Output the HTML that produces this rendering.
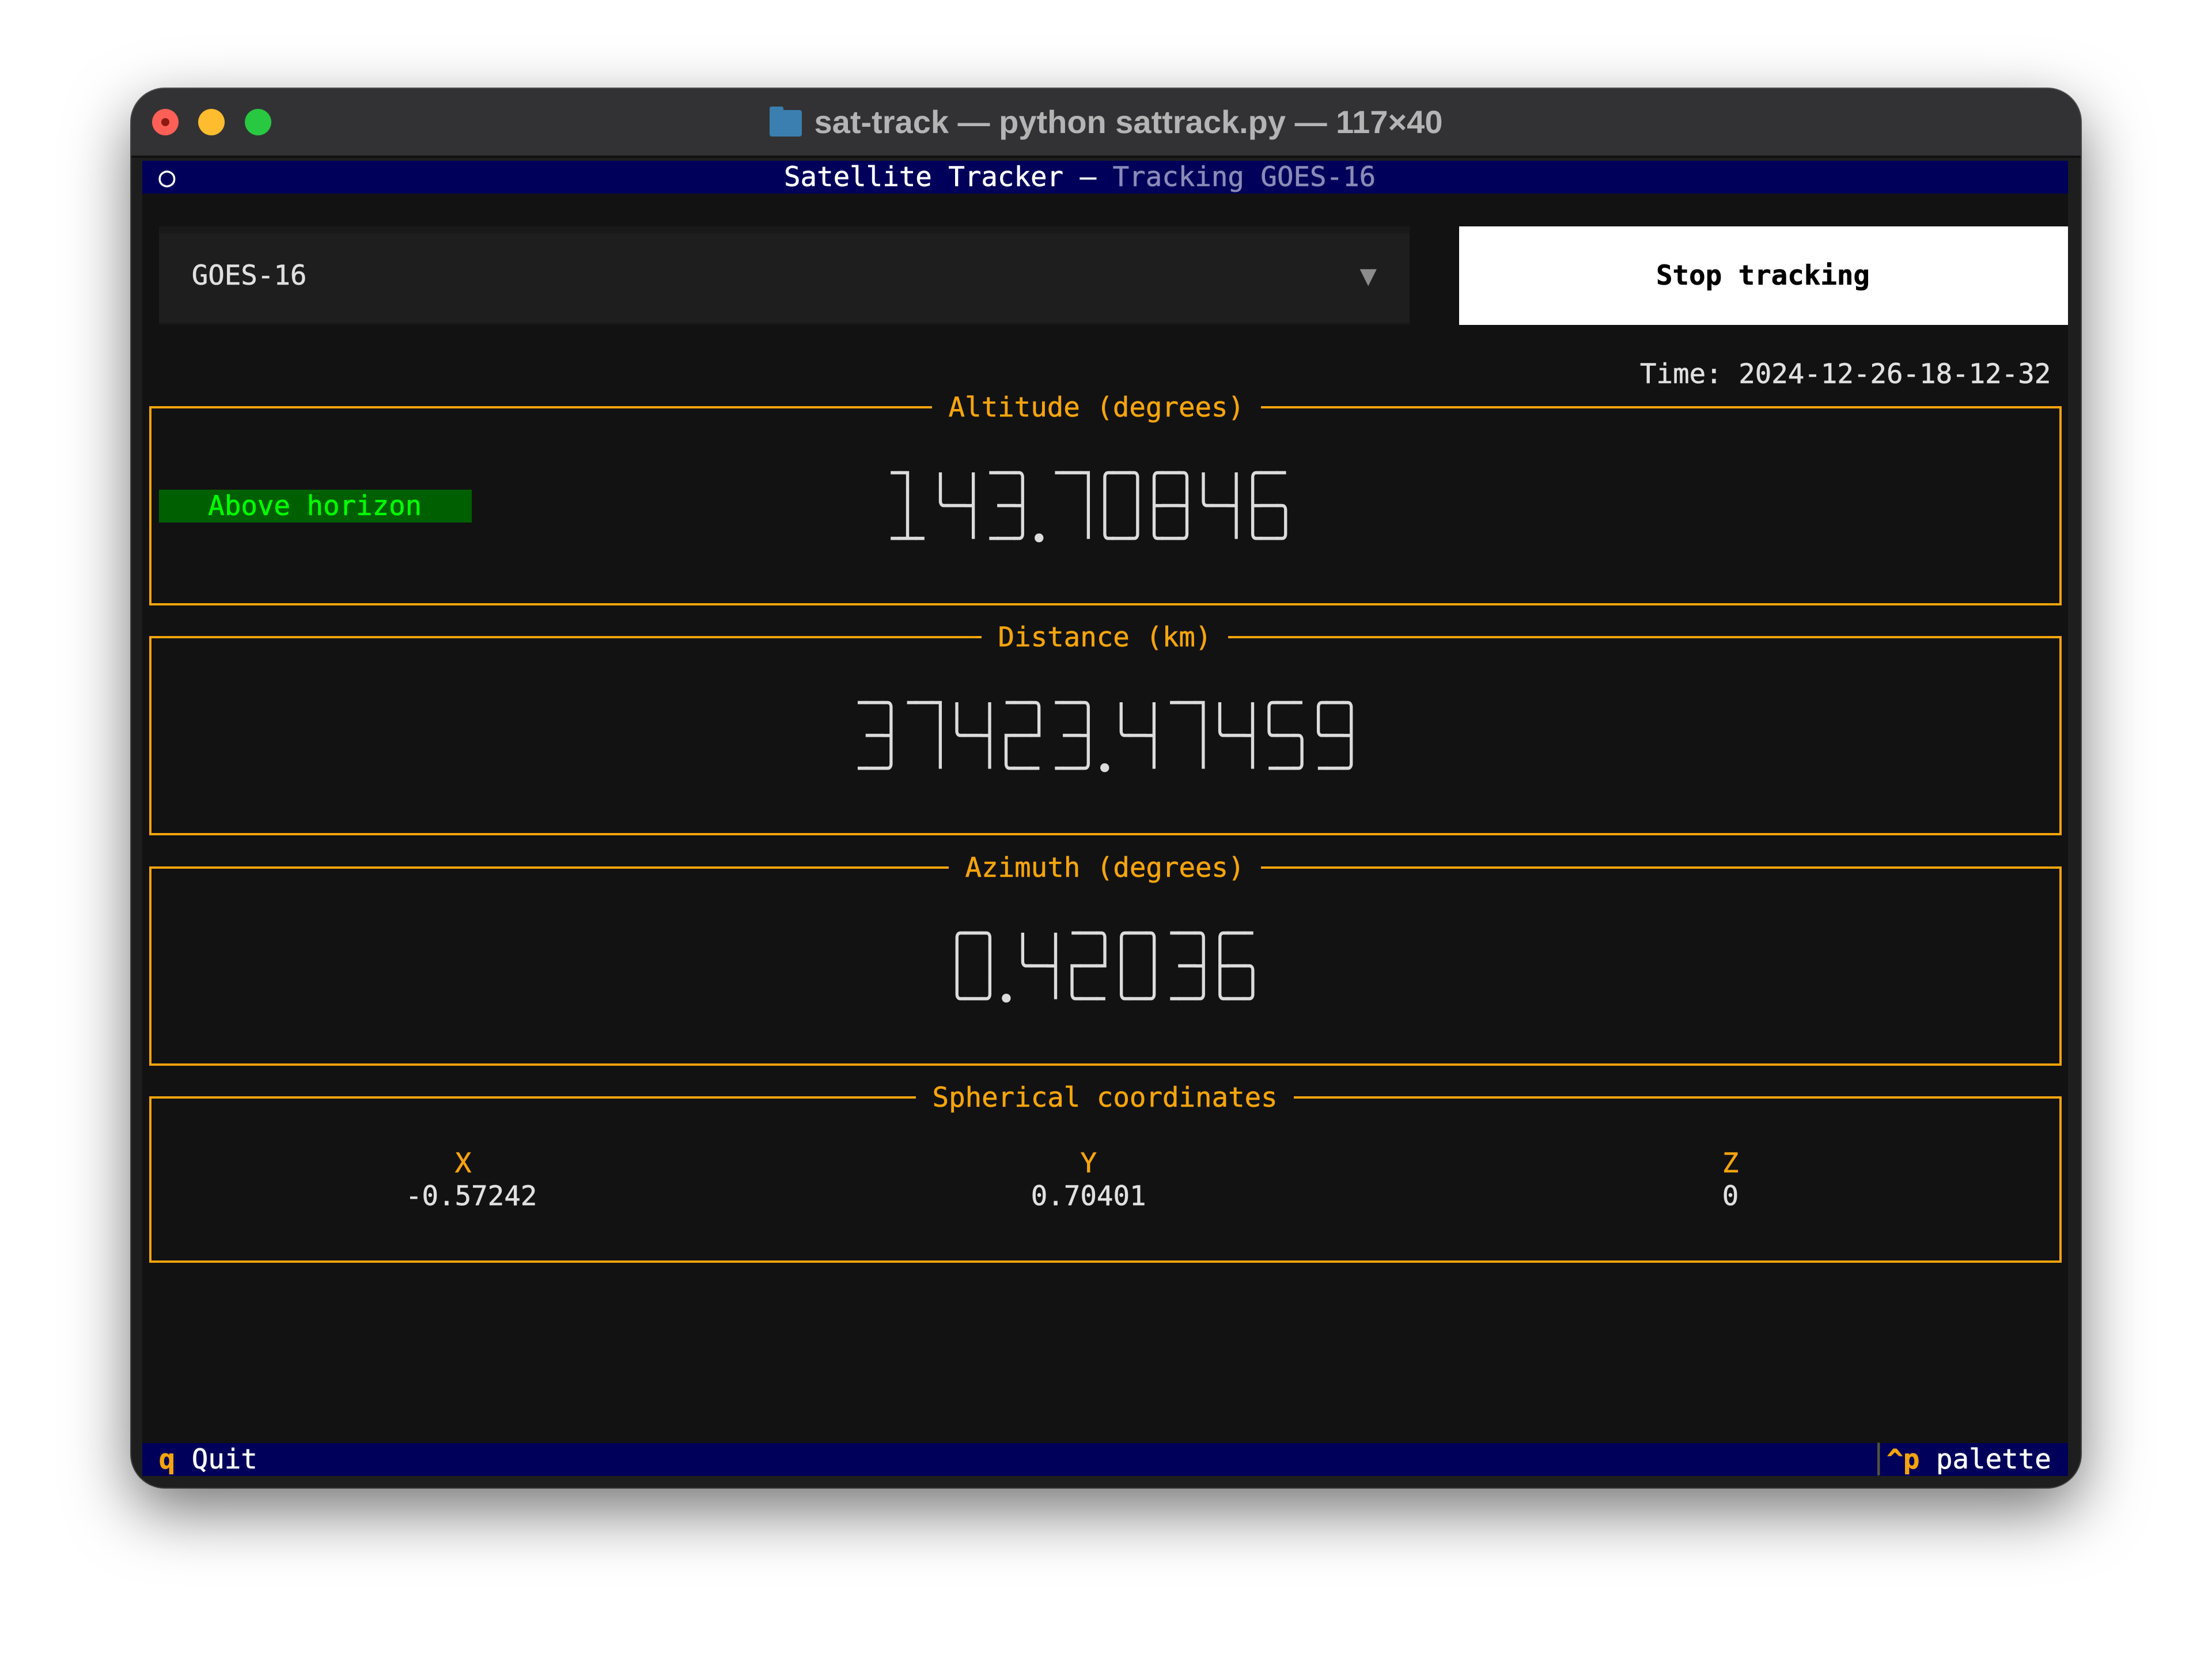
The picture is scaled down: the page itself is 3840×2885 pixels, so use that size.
<!DOCTYPE html>
<html><head><meta charset="utf-8"><style>
html,body{margin:0;padding:0;}
body{width:3840px;height:2885px;background:#fff;position:relative;overflow:hidden;font-family:"DejaVu Sans Mono","Liberation Mono",monospace;}
.win{position:absolute;left:228px;top:154px;width:3384px;height:2428px;border-radius:58px;background:#1e1e1e;box-shadow:0 40px 110px rgba(0,0,0,0.55),0 0 0 2px #555;overflow:hidden;}
.tb{position:absolute;left:0;top:0;width:100%;height:116px;background:#323234;border-bottom:4px solid #111;}
.dot{position:absolute;top:35px;width:46px;height:46px;border-radius:50%;}
.ttl{position:absolute;left:0;width:100%;top:26px;text-align:center;font-family:"Liberation Sans",sans-serif;font-weight:bold;font-size:56px;color:#b4b4b4;line-height:64px;}
.term{position:absolute;left:247px;top:279px;width:3343px;height:2283px;background:#121212;}
.t{position:absolute;font-size:47.4px;line-height:57.07px;height:57.07px;white-space:pre;color:#e0e0e0;-webkit-text-stroke:0.6px currentColor;}
.box{position:absolute;border:4px solid #f4a40c;box-sizing:border-box;}
.or{color:#f4a40c;}
.dg{position:absolute;font-size:47.4px;line-height:57.07px;white-space:pre;color:#dcdcdc;font-family:"DejaVu Sans Mono",monospace;-webkit-text-stroke:1.6px #dcdcdc;}
</style></head><body>
<div class="win">
 <div class="tb">
  <div class="dot" style="left:36px;background:#fe5f57;"><div style="position:absolute;left:16px;top:16px;width:14px;height:14px;border-radius:50%;background:#8c1a10"></div></div>
  <div class="dot" style="left:116px;background:#febc2e;"></div>
  <div class="dot" style="left:197px;background:#28c840;"></div>
  <div class="ttl"><span style="display:inline-block;width:56px;height:46px;background:#3b7fb0;border-radius:4px;vertical-align:-6px;margin-right:22px;position:relative;"><span style="position:absolute;left:0;top:-6px;width:24px;height:8px;background:#3b7fb0;border-radius:3px 3px 0 0"></span></span>sat-track — python sattrack.py — 117×40</div>
 </div>
</div>
<div class="term">
 <div style="position:absolute;left:0;top:0;width:3343px;height:57px;background:#00005a;"></div>
 <div class="t" style="left:28.6px;top:0;color:#fff;">○</div>
 <div class="t" style="left:1114px;top:0;color:#fff;">Satellite Tracker — <span style="color:#8a8ab8">Tracking GOES-16</span></div>
 <div style="position:absolute;left:28.6px;top:114px;width:2171px;height:171px;background:#1e1e1e;border-top:12px solid #191919;border-bottom:4px solid #181818;box-sizing:border-box;"></div>
 <div class="t" style="left:85.7px;top:171px;color:#e0e0e0;">GOES-16</div>
 <div class="t" style="left:2114px;top:171px;color:#8c8c8c;">▼</div>
 <div style="position:absolute;left:2286px;top:114px;width:1057px;height:171px;background:#fff;"></div>
 <div class="t" style="left:2628px;top:171px;color:#000;font-weight:bold;">Stop tracking</div>
 <div class="t" style="left:2600px;top:342.4px;">Time: 2024-12-26-18-12-32</div>
 <div class="box" style="left:12px;top:426px;width:3320px;height:346px;"></div>
 <div class="box" style="left:12px;top:825px;width:3320px;height:346px;"></div>
 <div class="box" style="left:12px;top:1225px;width:3320px;height:346px;"></div>
 <div class="box" style="left:12px;top:1624px;width:3320px;height:289px;"></div>
 <div class="t or" style="left:1371px;top:399.5px;background:#121212;"> Altitude (degrees) </div>
 <div class="t or" style="left:1457px;top:799px;background:#121212;"> Distance (km) </div>
 <div class="t or" style="left:1400px;top:1198.5px;background:#121212;"> Azimuth (degrees) </div>
 <div class="t or" style="left:1343px;top:1598px;background:#121212;"> Spherical coordinates </div>
 <div style="position:absolute;left:28.6px;top:570.7px;width:543px;height:57px;background:#005f00;"></div>
 <div class="t" style="left:114.3px;top:570.7px;color:#00ff00;">Above horizon</div>
 <div class="dg" style="left:1285.7px;top:513.6px;">╶┐ ╷ ╷╶─╮ ╶─┐╭─╮╭─╮╷ ╷╭─╴
 │ ╰─┤ ─┤   ││ │├─┤╰─┤├─╮
╶┴╴  ╵╶─╯•  ╵╰─╯╰─╯  ╵╰─╯</div>
 <div class="dg" style="left:1228.5px;top:913.1px;">╶─╮╶─┐╷ ╷╶─╮╶─╮ ╷ ╷╶─┐╷ ╷╭─╴╭─╮
 ─┤  │╰─┤┌─┘ ─┤ ╰─┤  │╰─┤╰─╮╰─┤
╶─╯  ╵  ╵╰─╴╶─╯•  ╵  ╵  ╵╶─╯╶─╯</div>
 <div class="dg" style="left:1400px;top:1312.6px;">╭─╮ ╷ ╷╶─╮╭─╮╶─╮╭─╴
│ │ ╰─┤┌─┘│ │ ─┤├─╮
╰─╯•  ╵╰─╴╰─╯╶─╯╰─╯</div>
 <div class="t or" style="left:542.8px;top:1712px;">X</div>
 <div class="t" style="left:457px;top:1769px;">-0.57242</div>
 <div class="t or" style="left:1628.5px;top:1712px;">Y</div>
 <div class="t" style="left:1542.8px;top:1769px;">0.70401</div>
 <div class="t or" style="left:2742.7px;top:1712px;">Z</div>
 <div class="t" style="left:2742.7px;top:1769px;">0</div>
 <div style="position:absolute;left:0;top:2226px;width:3343px;height:57px;background:#00005a;"></div>
 <div class="t or" style="left:28.6px;top:2226px;font-weight:bold;">q</div>
 <div class="t" style="left:85.7px;top:2226px;color:#fff;">Quit</div>
 <div class="t" style="left:3000px;top:2226px;color:#55553a;">│</div>
 <div class="t or" style="left:3028.4px;top:2226px;font-weight:bold;">^p</div>
 <div class="t" style="left:3114px;top:2226px;color:#fff;">palette</div>
</div>
</body></html>
